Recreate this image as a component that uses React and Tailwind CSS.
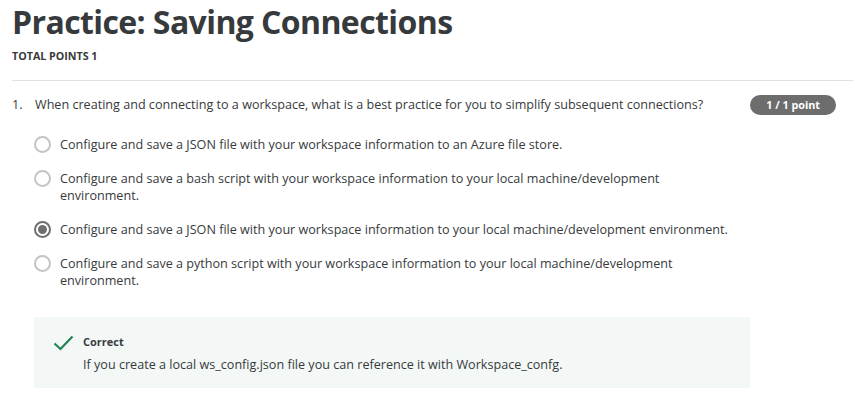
import React from "react";

const OPTIONS = [
  { text: "Configure and save a JSON file with your workspace information to an Azure file store.", checked: false },
  { text: "Configure and save a bash script with your workspace information to your local machine/development environment.", checked: false },
  { text: "Configure and save a JSON file with your workspace information to your local machine/development environment.", checked: true },
  { text: "Configure and save a python script with your workspace information to your local machine/development environment.", checked: false },
];

function Radio({ checked }) {
  return (
    <span className="flex h-[17px] w-[17px] shrink-0 items-center justify-center rounded-full border-2 border-[#c4c4c4] bg-white data-[on=true]:border-[#6f6f6f]" data-on={checked}>
      {checked && <span className="h-[9px] w-[9px] rounded-full bg-[#6f6f6f]" />}
    </span>
  );
}

export default function App() {
  return (
    <div className="min-h-screen bg-white pl-3 pr-[2px] text-[#373a3c]" style={{ fontFamily: '"Open Sans", sans-serif' }}>
      <h1 className="text-[32px] font-bold leading-[44px] tracking-[-0.6px] text-[#373a3c]">Practice: Saving Connections</h1>
      <div className="mt-[5px] text-[10.7px] font-bold leading-[14px] uppercase">Total Points 1</div>
      <hr className="mt-[17px] border-t border-[#e1e1e1]" />

      <div className="mt-[15px] flex items-start">
        <span className="w-[23px] text-[12.6px] leading-[18px]">1.</span>
        <p className="flex-1 text-[12.6px] leading-[18px]">
          When creating and connecting to a workspace, what is a best practice for you to simplify subsequent connections?
        </p>
        <span className="mr-[17px] mt-[-1px] rounded-full bg-[#6d6d6d] px-[16px] text-[10.8px] font-bold leading-[20px] text-white">1 / 1 point</span>
      </div>

      <div className="ml-[22px] mt-[21px] flex w-[700px] flex-col gap-[17px]">
        {OPTIONS.map((o, i) => (
          <label key={i} className="flex items-start gap-[9px]">
            <Radio checked={o.checked} />
            <span className="w-[674px] text-[12.6px] leading-[17px]">{o.text}</span>
          </label>
        ))}
      </div>

      <div className="ml-[22px] mt-[28px] flex w-[716px] gap-[9px] bg-[#f3f8f6] pl-[19px] pt-[17px] pb-[14px]">
        <svg width="21" height="16" viewBox="0 0 21 16" className="mt-[1px] shrink-0">
          <path d="M1.5 8.5 L7.5 14 L19.5 1.5" fill="none" stroke="#1f8354" strokeWidth="2.2" />
        </svg>
        <div>
          <div className="text-[11px] font-bold leading-[16px]">Correct</div>
          <div className="mt-[6px] text-[12.6px] leading-[18px]">If you create a local ws_config.json file you can reference it with Workspace_confg.</div>
        </div>
      </div>
    </div>
  );
}
